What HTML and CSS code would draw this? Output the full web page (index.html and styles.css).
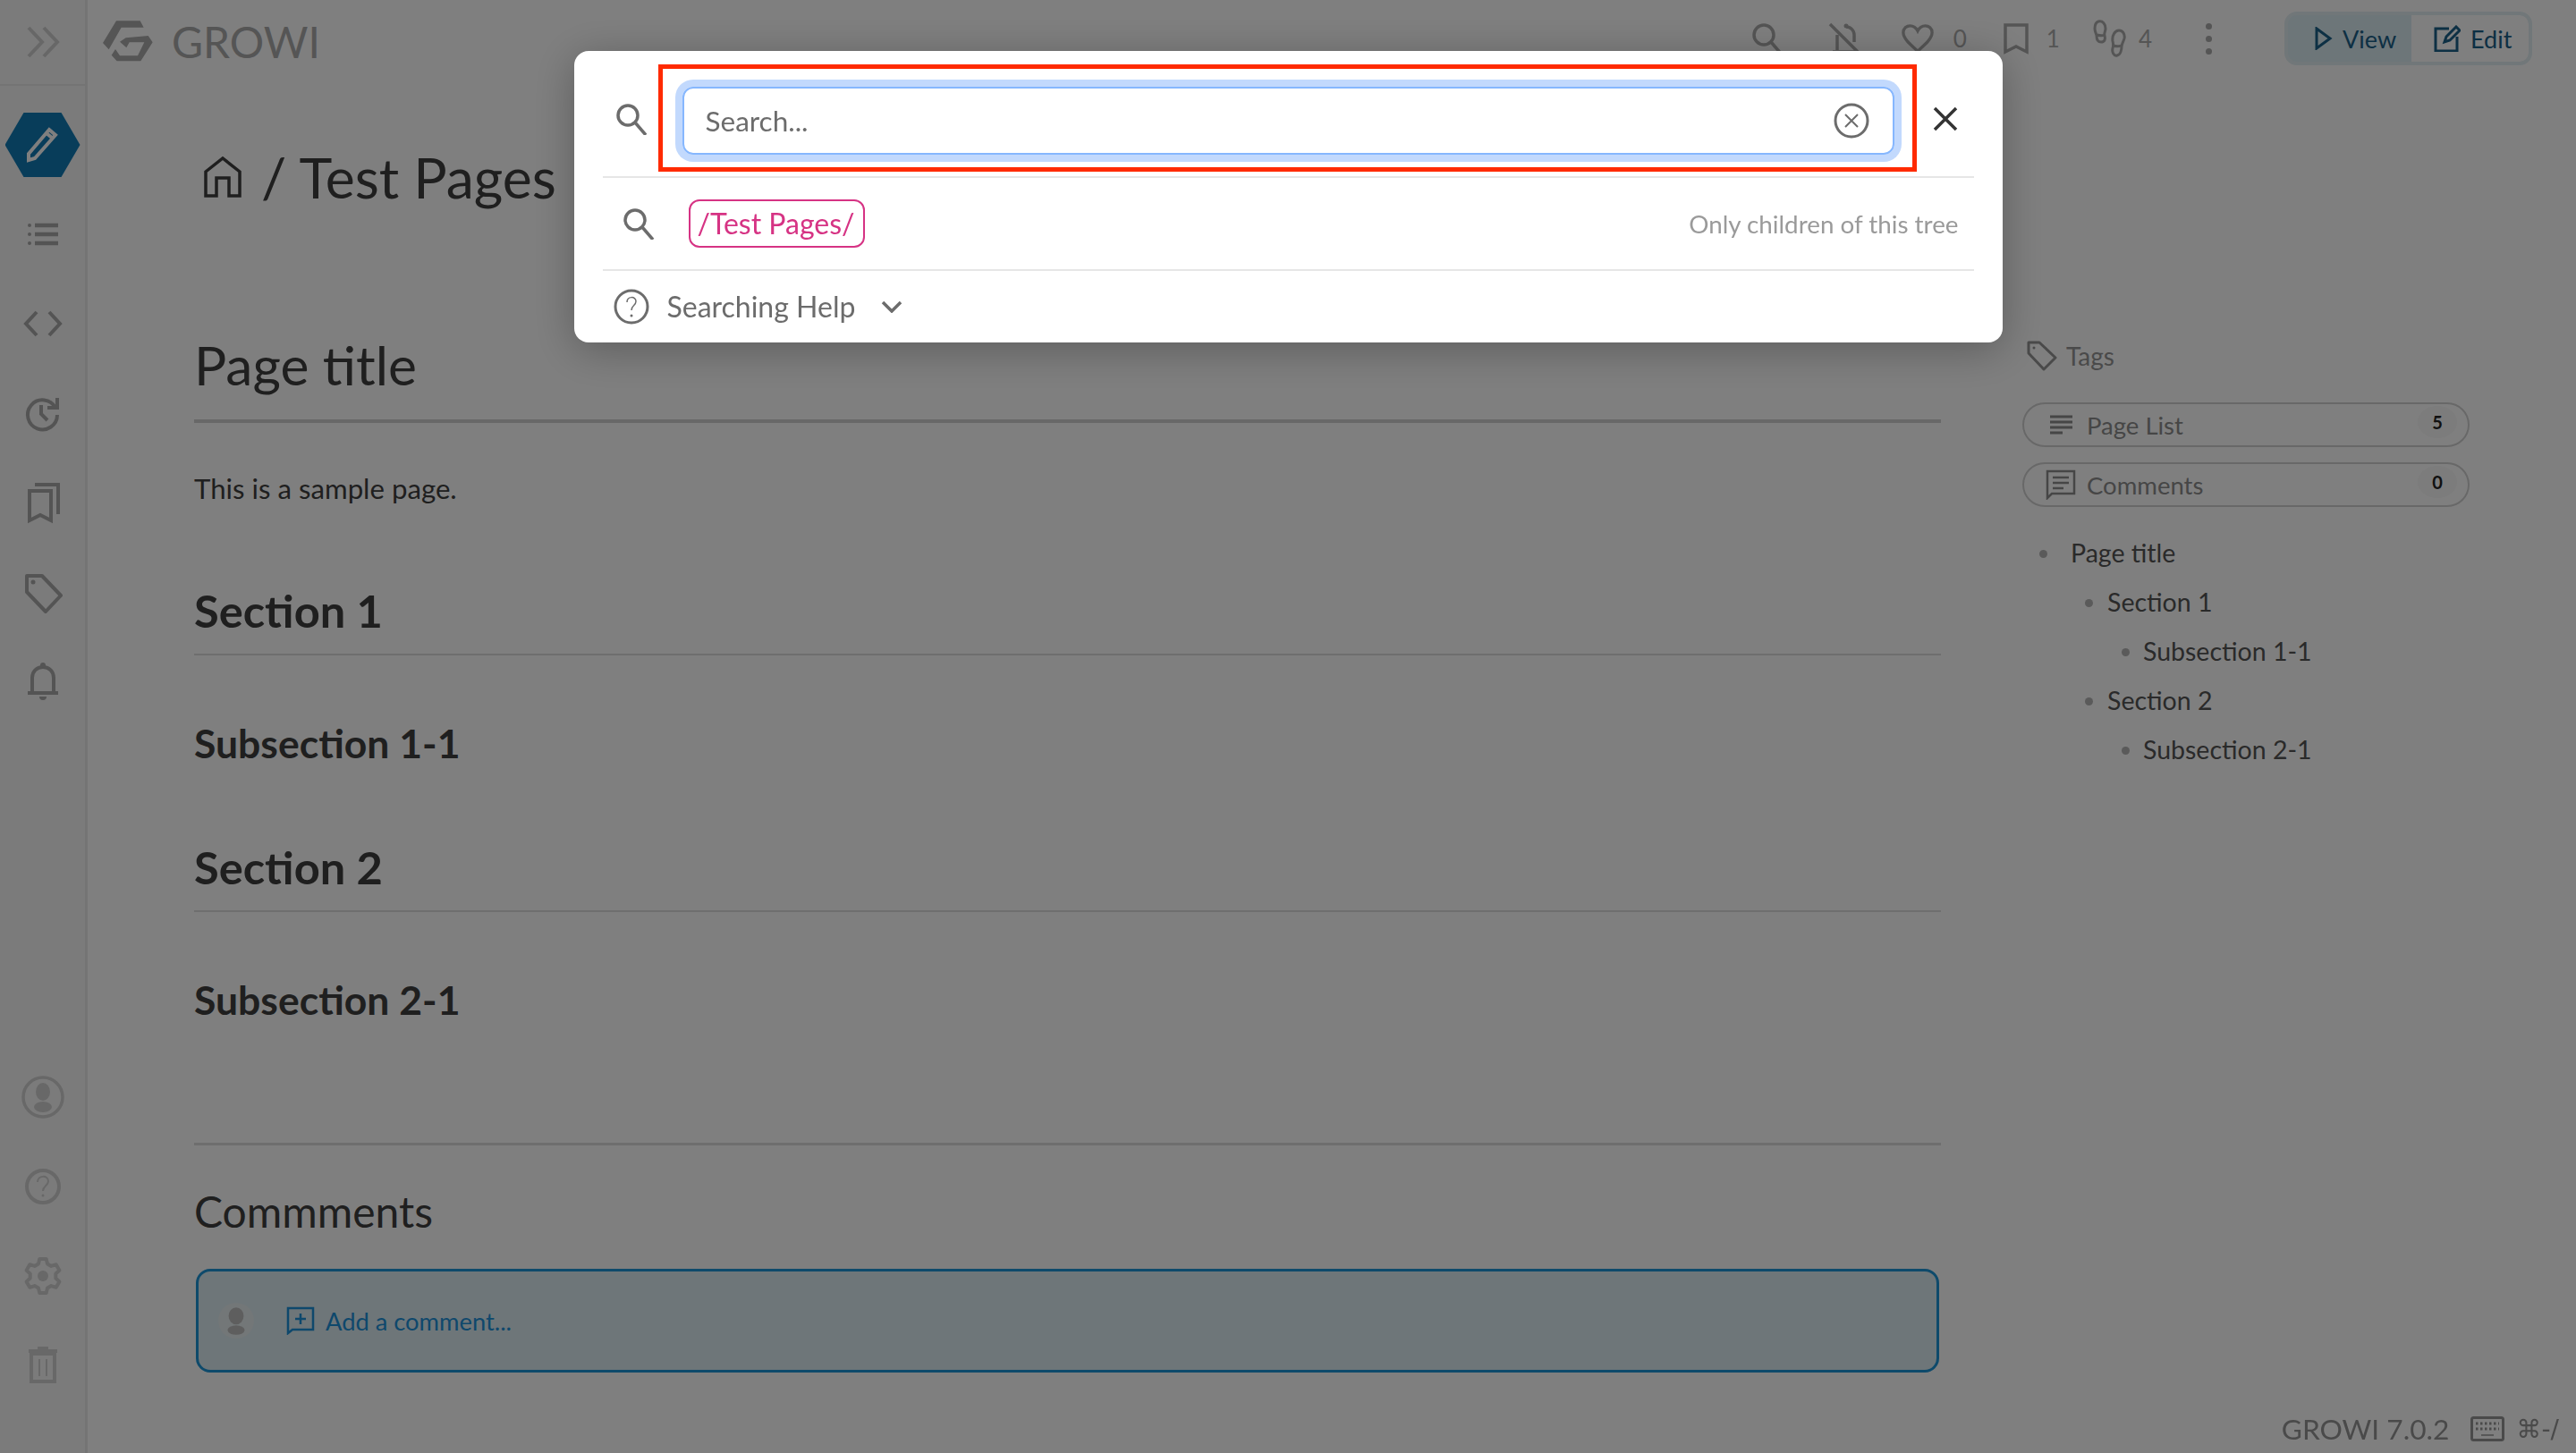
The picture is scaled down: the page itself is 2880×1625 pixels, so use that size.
FILE: index.html
```html
<!DOCTYPE html>
<html lang="en">
<head>
    <meta charset="UTF-8">
    <title>Test Pages - GROWI</title>
    <link rel="stylesheet" href="styles.css">
</head>
<body>
    <nav class="sidebar">
        <div class="sidebar-top">
            <svg class="icon-side" viewBox="0 0 48 48"><path d="M8 8l15 16L8 40M25 8l15 16-15 16"/></svg>
        </div>
        <div class="hex">
            <svg viewBox="0 0 40 40"><path d="M27 3l7 6L11 35l-7 2 0-7zM24 7l6 5"/></svg>
        </div>
        <div class="side-item">
            <svg class="icon-side" viewBox="0 0 48 48"><path class="thick" d="M15 14h26M15 24h26M15 34h26"/><circle class="dot" cx="9" cy="14" r="2"/><circle class="dot" cx="9" cy="24" r="2"/><circle class="dot" cx="9" cy="34" r="2"/></svg>
        </div>
        <div class="side-item">
            <svg class="icon-side" viewBox="0 0 48 48"><path d="M17 11L5 24l12 13M31 11l12 13-12 13"/></svg>
        </div>
        <div class="side-item">
            <svg class="icon-side" viewBox="0 0 48 48"><path d="M38 18a16.500 16.500 0 1 0 2 8M40 7v11H29M22 15v10l7 7"/></svg>
        </div>
        <div class="side-item">
            <svg class="icon-side" viewBox="0 0 48 48"><path d="M9 44V11h24v33l-12-6zM15 4h26v33"/></svg>
        </div>
        <div class="side-item">
            <svg class="icon-side" viewBox="0 0 48 48"><path d="M6 6h17l21 22-17 18L6 24z" stroke-linejoin="round"/><circle class="dot" cx="13" cy="13" r="2.500"/></svg>
        </div>
        <div class="side-item">
            <svg class="icon-side" viewBox="0 0 48 48"><path d="M12 36V20c0-7 5-12 12-12s12 5 12 12v16M7 37h34"/><circle class="dot" cx="24" cy="6" r="3"/><path class="dot" d="M20 41h8a4 4 0 0 1-8 0z"/></svg>
        </div>
        <div class="side-bottom">
            <div class="side-item faint">
                <svg class="icon-side icon-user" viewBox="0 0 48 48"><circle cx="24" cy="24" r="22"/><ellipse class="dot" cx="24" cy="18" rx="8" ry="10"/><ellipse class="dot" cx="24" cy="35" rx="10" ry="6"/></svg>
            </div>
            <div class="side-item faint">
                <svg class="icon-side" viewBox="0 0 48 48"><circle cx="24" cy="24" r="18"/><path class="hair" d="M18 19c0-8 12-8 12-1 0 5-6 5-6 11"/><circle class="dot" cx="24" cy="34" r="1.500"/></svg>
            </div>
            <div class="side-item faint">
                <svg class="icon-side" viewBox="0 0 48 48"><path d="M19 10.400L20.300 4.900H27.700L29 10.400L33.300 12.900L38.700 11.200L42.400 17.700L38.300 21.500V26.500L42.400 30.400L38.700 36.800L33.300 35.100L29 37.600L27.700 43.100H20.300L19 37.600L14.700 35.100L9.300 36.800L5.600 30.400L9.700 26.500V21.500L5.600 17.700L9.300 11.200L14.700 12.900z" stroke-linejoin="round"/><circle class="dot" cx="24" cy="24" r="6"/></svg>
            </div>
            <div class="side-item faint">
                <svg class="icon-side" viewBox="0 0 48 48"><path d="M11 11h26v31H11zM8 8h32M18 5h12"/><path class="hair" d="M20 17v19M28 17v19"/></svg>
            </div>
        </div>
    </nav>

    <div class="page">
        <header class="topbar">
            <div class="brand">
                <svg class="logo" viewBox="0 0 240 195"><path d="M78 25h80l12 22H95l-42 74-20-22z"/><path d="M110 82l75-7 15 22-40 63H80l-18-20 13-20 15 22h60l22-45h-50l-10 18-22-20z"/></svg>
                <span class="brand-name">GROWI</span>
            </div>
            <div class="top-tools">
                <svg class="tool-icon" viewBox="0 0 36 36"><circle cx="14" cy="14" r="11"/><path d="M22 22l12 14"/></svg>
                <svg class="tool-icon tool-bell" viewBox="0 0 36 36"><path d="M2 2l32 32M10 14v17M29 22V14c0-5-4-9-9-9M5 33h26"/><circle class="dot" cx="20" cy="4" r="2.500"/></svg>
                <span class="tool-count count-heart">
                    <svg class="tool-icon" viewBox="0 0 38 34"><path d="M19 32C9 23 2 17 2 10c0-5 4-8 8-8 4 0 7 2 9 6 2-4 5-6 9-6 4 0 8 3 8 8 0 7-7 13-17 22z"/></svg>
                    0
                </span>
                <span class="tool-count count-mark">
                    <svg class="tool-icon icon-mark" viewBox="0 0 28 34"><path d="M2 32V2h24v30l-12-6z"/></svg>
                    1
                </span>
                <span class="tool-count count-steps">
                    <svg class="icon-steps" viewBox="0 0 42 42"><path d="M6 2c5-1 8 3 8 8 0 3-2 5-1 8 1 4 0 7-4 7s-5-4-5-7c0-2-2-4-2-8 0-4 1-7 4-8zM5 17c3 1 6 1 8 0M29 12c4 0 7 4 6 9-1 4-3 6-3 9s-1 9-5 10-6-4-5-8c1-3 1-4 0-8-1-7 3-12 7-12zM23 29c3 1 6 1 8 0"/></svg>
                    4
                </span>
                <span class="kebab"><i></i><i></i><i></i></span>
                <div class="mode-switch">
                    <span class="mode mode-view">
                        <svg viewBox="0 0 20 26"><path d="M2 2l15 11L2 24z"/></svg>
                        View
                    </span>
                    <span class="mode mode-edit">
                        <svg viewBox="0 0 30 30"><path d="M17 4H2v25h24V13M12 19l2-6L25 2l4 4-11 11z"/></svg>
                        Edit
                    </span>
                </div>
            </div>
        </header>

        <div class="columns">
            <main class="content">
                <h1 class="crumb">
                    <svg class="home" viewBox="0 0 42 46"><path d="M2 44V17L21 2l19 15v27H28V24H14v20z"/></svg>
                    <span>/ Test Pages</span>
                </h1>
                <h1 class="wiki-h1">Page title</h1>
                <p class="wiki-p">This is a sample page.</p>
                <h2 class="wiki-h2">Section 1</h2>
                <h3 class="wiki-h3">Subsection 1-1</h3>
                <h2 class="wiki-h2 second">Section 2</h2>
                <h3 class="wiki-h3">Subsection 2-1</h3>
                <section class="comments">
                    <h2 class="comments-title">Commments</h2>
                    <div class="comment-box">
                        <span class="avatar">
                            <svg viewBox="0 0 38 38"><ellipse cx="19" cy="14" rx="8" ry="9"/><ellipse cx="19" cy="29" rx="9" ry="5"/></svg>
                        </span>
                        <svg class="add-icon" viewBox="0 0 32 32"><path d="M2 30V2h28v24H7zM16 8v12M10 14h12"/></svg>
                        <span>Add a comment...</span>
                    </div>
                </section>
            </main>

            <aside class="side-panel">
                <div class="tags">
                    <svg viewBox="0 0 34 34"><path d="M2 2h12l18 17-13 13L2 14z" stroke-linejoin="round"/><circle class="dot" cx="8" cy="8" r="1.500"/></svg>
                    <span>Tags</span>
                </div>
                <div class="pill-btn">
                    <svg viewBox="0 0 28 24"><path d="M1 3h25M1 9h25M1 15h25M1 21h14"/></svg>
                    <span class="pill-label">Page List</span>
                    <span class="badge">5</span>
                </div>
                <div class="pill-btn">
                    <svg class="pill-comment" viewBox="0 0 34 34"><path d="M2 32V2h30v25H7zM8 9h18M8 15h18M8 21h12"/></svg>
                    <span class="pill-label">Comments</span>
                    <span class="badge">0</span>
                </div>
                <ul class="toc">
                    <li class="toc-1">Page title</li>
                    <li class="toc-2">Section 1</li>
                    <li class="toc-3">Subsection 1-1</li>
                    <li class="toc-2">Section 2</li>
                    <li class="toc-3">Subsection 2-1</li>
                </ul>
            </aside>
        </div>

        <footer class="version">
            <span>GROWI 7.0.2</span>
            <svg viewBox="0 0 38 28"><rect x="1.500" y="1.500" width="35" height="25" rx="2"/><path class="hair" d="M12 21h14"/><path class="dotted" d="M6 8h26M6 14h26"/></svg>
            <span class="shortcut">⌘-/</span>
        </footer>
    </div>

    <div class="backdrop">
        <div class="search-modal">
            <div class="search-row">
                <svg class="search-icon" viewBox="0 0 36 36"><circle cx="14" cy="14" r="11"/><path d="M22 22l12 14"/></svg>
                <div class="highlight">
                    <div class="search-input">
                        <span>Search...</span>
                        <svg class="clear-icon" viewBox="0 0 40 40"><circle cx="20" cy="20" r="18"/><path class="hair" d="M13 13l14 14M27 13L13 27"/></svg>
                    </div>
                </div>
                <svg class="close-icon" viewBox="0 0 28 28"><path d="M2 2l24 24M26 2L2 26"/></svg>
            </div>
            <div class="scope-row">
                <svg class="search-icon" viewBox="0 0 36 36"><circle cx="14" cy="14" r="11"/><path d="M22 22l12 14"/></svg>
                <span class="scope-tag">/Test Pages/</span>
                <span class="scope-note">Only children of this tree</span>
            </div>
            <div class="help-row">
                <svg class="help-icon" viewBox="0 0 40 40"><circle cx="20" cy="20" r="18"/><path class="hair" d="M15 15c0-7 10-7 10-1 0 5-5 4-5 10"/><circle class="dot" cx="20" cy="30" r="1.500"/></svg>
                <span>Searching Help</span>
                <svg class="chevron" viewBox="0 0 24 14"><path d="M2 2l10 10L22 2"/></svg>
            </div>
        </div>
    </div>
</body>
</html>
```

FILE: styles.css
```css
* {
    box-sizing: border-box;
}
html, body {
    height: 100%;
}
body {
    margin: 0;
    display: flex;
    overflow: hidden;
    background: #fff;
    color: #3e3e3e;
    font-family: 'Lato', sans-serif;
    font-size: 28px;
}
svg {
    display: block;
    fill: none;
    stroke: currentColor;
    stroke-width: 3;
    flex-shrink: 0;
}
svg .dot {
    fill: currentColor;
    stroke: none;
}
svg .hair {
    stroke-width: 1.500;
}

/* sidebar */
.sidebar {
    width: 98px;
    flex-shrink: 0;
    display: flex;
    flex-direction: column;
    align-items: center;
    background: #f6f6f6;
    border-right: 3px solid #e8e8e8;
    color: #a8a8a8;
}
.sidebar-top {
    width: 100%;
    height: 96px;
    display: flex;
    align-items: center;
    justify-content: center;
    border-bottom: 2px solid #e8e8e8;
    color: #cfcfcf;
}
.icon-side {
    width: 48px;
    height: 48px;
    stroke-width: 4;
}
.icon-side .thick {
    stroke-width: 4.500;
}
.icon-side .hair {
    stroke-width: 2;
}
.hex {
    width: 84px;
    height: 72px;
    margin-top: 30px;
    margin-bottom: 14px;
    display: flex;
    align-items: center;
    justify-content: center;
    background: #107ab4;
    clip-path: polygon(25% 0, 75% 0, 100% 50%, 75% 100%, 25% 100%, 0 50%);
    color: #fff;
}
.hex svg {
    width: 40px;
    height: 40px;
    stroke-width: 4;
}
.side-item {
    height: 100px;
    flex-shrink: 0;
    display: flex;
    align-items: center;
    justify-content: center;
}
.side-bottom {
    margin-top: auto;
    padding-bottom: 48px;
    color: #d0d0d0;
}
.icon-user {
    stroke-width: 3.500;
}

/* page */
.page {
    flex: 1;
    min-width: 0;
    display: flex;
    flex-direction: column;
}
.topbar {
    height: 86px;
    flex-shrink: 0;
    display: flex;
    align-items: center;
    justify-content: space-between;
    padding-left: 18px;
    padding-right: 49px;
    color: #aaa;
}
.brand {
    display: flex;
    align-items: center;
    gap: 20px;
    margin-top: 8px;
}
.logo {
    width: 80px;
    height: 65px;
    margin: 0 -12px;
    fill: #aaa;
    stroke: none;
}
.brand-name {
    font-size: 48px;
    line-height: 1;
    color: #aaa;
}
.top-tools {
    display: flex;
    align-items: center;
}
.tool-icon {
    width: 36px;
    height: 36px;
    stroke-width: 3.500;
}
.tool-bell {
    margin-left: 50px;
    margin-right: 46px;
}
.tool-count {
    display: flex;
    align-items: center;
    gap: 22px;
    font-size: 26px;
    color: #aaa;
}
.count-mark {
    margin-left: 41px;
    gap: 20px;
}
.icon-mark {
    width: 28px;
}
.count-steps {
    margin-left: 37px;
    gap: 9px;
}
.icon-steps {
    width: 42px;
    height: 42px;
    stroke-width: 3;
}
.kebab {
    margin-left: 60px;
    margin-right: 81px;
    display: flex;
    flex-direction: column;
    gap: 7px;
}
.kebab i {
    width: 7px;
    height: 7px;
    border-radius: 50%;
    background: #aaa;
}
.mode-switch {
    display: flex;
    height: 60px;
    margin-top: 0;
    border: 4px solid #e2eef3;
    border-radius: 14px;
    background: #daecf2;
    color: #1a6088;
    overflow: hidden;
}
.mode {
    display: flex;
    align-items: center;
    font-size: 27px;
}
.mode-view {
    width: 138px;
    padding-left: 30px;
    gap: 11px;
}
.mode-view svg {
    width: 20px;
    height: 26px;
}
.mode-edit {
    width: 131px;
    padding-left: 25px;
    gap: 11px;
    background: #fff;
    border-radius: 0 8px 8px 0;
}
.mode-edit svg {
    width: 30px;
    height: 30px;
}

.columns {
    display: flex;
    flex: 1;
    min-height: 0;
    padding-left: 119px;
}
.content {
    width: 1953px;
    flex-shrink: 0;
}
.crumb {
    display: flex;
    align-items: center;
    gap: 22px;
    margin: 0;
    padding-top: 67px;
    padding-left: 11px;
    font-size: 62.500px;
    font-weight: 400;
    line-height: 90px;
}
.home {
    width: 42px;
    height: 46px;
    stroke-width: 3.500;
}
.wiki-h1 {
    margin: 129px 0 0;
    padding-bottom: 25px;
    border-bottom: 4px solid #d0d0d0;
    font-size: 60.500px;
    font-weight: 400;
    line-height: 72px;
}
.wiki-p {
    margin: 52px 0 0;
    font-size: 31.200px;
    line-height: 42px;
}
.wiki-h2 {
    margin: 85px 0 0;
    padding-bottom: 17px;
    border-bottom: 2px solid #dcdcdc;
    font-size: 50.600px;
    font-weight: 700;
    line-height: 62px;
}
.wiki-h2.second {
    margin-top: 80px;
}
.wiki-h3 {
    margin: 70px 0 0;
    font-size: 44.500px;
    font-weight: 700;
    line-height: 56px;
}
.comments {
    margin-top: 132px;
    border-top: 3px solid #dcdcdc;
}
.comments-title {
    margin: 43px 0 0;
    font-size: 48px;
    font-weight: 400;
    line-height: 62px;
}
.comment-box {
    display: flex;
    align-items: center;
    height: 116px;
    margin: 33px 2px 0;
    padding-left: 22px;
    background: #dcecf2;
    border: 3px solid #1c94d6;
    border-radius: 16px;
    font-size: 27.300px;
    color: #1c90d8;
}
.avatar {
    width: 40px;
    height: 40px;
    margin-right: 36px;
    border-radius: 50%;
    background: #e6eef0;
}
.avatar svg {
    width: 40px;
    height: 40px;
    fill: #bdbdbd;
    stroke: none;
}
.add-icon {
    width: 32px;
    height: 32px;
    margin-right: 12px;
    stroke-width: 2.500;
}

/* right panel */
.side-panel {
    width: 500px;
    margin-left: 91px;
    padding-top: 295px;
}
.tags {
    display: flex;
    align-items: center;
    gap: 10px;
    height: 34px;
    padding-left: 5px;
    color: #949494;
    font-size: 28px;
}
.tags svg {
    width: 34px;
    height: 34px;
}
.pill-btn {
    display: flex;
    align-items: center;
    height: 50px;
    margin-top: 17px;
    padding: 0 12px 0 28px;
    border: 2px solid #d0d0d0;
    border-radius: 25px;
    font-size: 27.500px;
    color: #8c8c8c;
}
.tags + .pill-btn {
    margin-top: 35px;
}
.pill-btn svg {
    width: 28px;
    height: 24px;
    margin-right: 14px;
    stroke-width: 3;
}
.pill-btn svg.pill-comment {
    width: 34px;
    height: 34px;
    margin-left: -4px;
    margin-right: 12px;
    stroke-width: 2.500;
}
.pill-label {
    flex: 1;
}
.badge {
    width: 44px;
    height: 36px;
    margin-top: -6px;
    border-radius: 50%;
    background: #f8f8f8;
    font-size: 20px;
    font-weight: 700;
    line-height: 36px;
    text-align: center;
    color: #222;
}
.toc {
    margin: 24px 0 0;
    padding: 0;
    list-style: none;
    font-size: 28.500px;
    line-height: 55px;
    color: #545454;
}
.toc li {
    position: relative;
}
.toc li::before {
    content: "";
    position: absolute;
    top: 24px;
    width: 9px;
    height: 9px;
    border-radius: 50%;
    background: #b4b4b4;
}
.toc-1 {
    padding-left: 54px;
}
.toc-1::before {
    left: 19px;
}
.toc-2 {
    padding-left: 95px;
}
.toc-2::before {
    left: 70px;
}
.toc-3 {
    padding-left: 135px;
}
.toc-3::before {
    left: 111px;
}

.version {
    position: fixed;
    right: 19px;
    bottom: 8px;
    display: flex;
    align-items: center;
    gap: 24px;
    font-size: 31.700px;
    color: #949494;
}
.version svg {
    width: 38px;
    height: 28px;
}
.version .dotted {
    stroke-width: 3;
    stroke-dasharray: 2.500 2.500;
}
.shortcut {
    margin-left: -11px;
    font-family: 'DejaVu Sans', 'Lato', sans-serif;
    font-size: 28px;
}

/* search modal */
.backdrop {
    position: fixed;
    inset: 0;
    display: flex;
    justify-content: center;
    align-items: flex-start;
    padding-top: 57px;
    background: rgba(0, 0, 0, .5);
}
.search-modal {
    width: 1597px;
    height: 326px;
    padding: 15px 32px 0;
    background: #fff;
    border-radius: 16px;
    box-shadow: 0 8px 48px rgba(0, 0, 0, .28);
    color: #6c6c6c;
}
.search-icon {
    width: 36px;
    height: 36px;
    stroke-width: 3.500;
}
.search-row {
    display: flex;
    align-items: center;
    height: 127px;
    padding-bottom: 3px;
    border-bottom: 2px solid #e6e6e6;
}
.search-row .search-icon {
    margin-left: 14px;
    margin-right: 12px;
}
.highlight {
    width: 1407px;
    height: 120px;
    align-self: flex-start;
    padding: 20px 20px 0 22px;
    border: 5px solid #ff2a00;
}
.search-input {
    display: flex;
    align-items: center;
    justify-content: space-between;
    height: 76px;
    padding: 0 26px 0 24px;
    border: 2px solid #86b7fe;
    border-radius: 12px;
    box-shadow: 0 0 0 8px #c2d9fd;
    font-size: 31.500px;
    color: #6c6c6c;
}
.clear-icon {
    width: 40px;
    height: 40px;
}
.clear-icon .hair {
    stroke-width: 2;
}
.close-icon {
    width: 28px;
    height: 28px;
    margin-left: 18px;
    stroke-width: 3.500;
    color: #333;
}
.scope-row {
    display: flex;
    align-items: center;
    height: 104px;
    padding-left: 22px;
    padding-right: 17px;
    border-bottom: 2px solid #e6e6e6;
}
.scope-row .search-icon {
    margin-right: 38px;
}
.scope-tag {
    padding: 0 9px 0 8px;
    height: 54px;
    border: 2px solid #d63384;
    border-radius: 12px;
    font-size: 32px;
    line-height: 50px;
    color: #d63384;
}
.scope-note {
    margin-left: auto;
    font-size: 27.800px;
    color: #9a9a9a;
}
.help-row {
    display: flex;
    align-items: center;
    height: 79px;
    padding-left: 12px;
    font-size: 32px;
}
.help-icon {
    width: 40px;
    height: 40px;
    margin-right: 20px;
    stroke-width: 3;
}
.chevron {
    width: 24px;
    height: 14px;
    margin-left: 29px;
    stroke-width: 3.500;
}
```
